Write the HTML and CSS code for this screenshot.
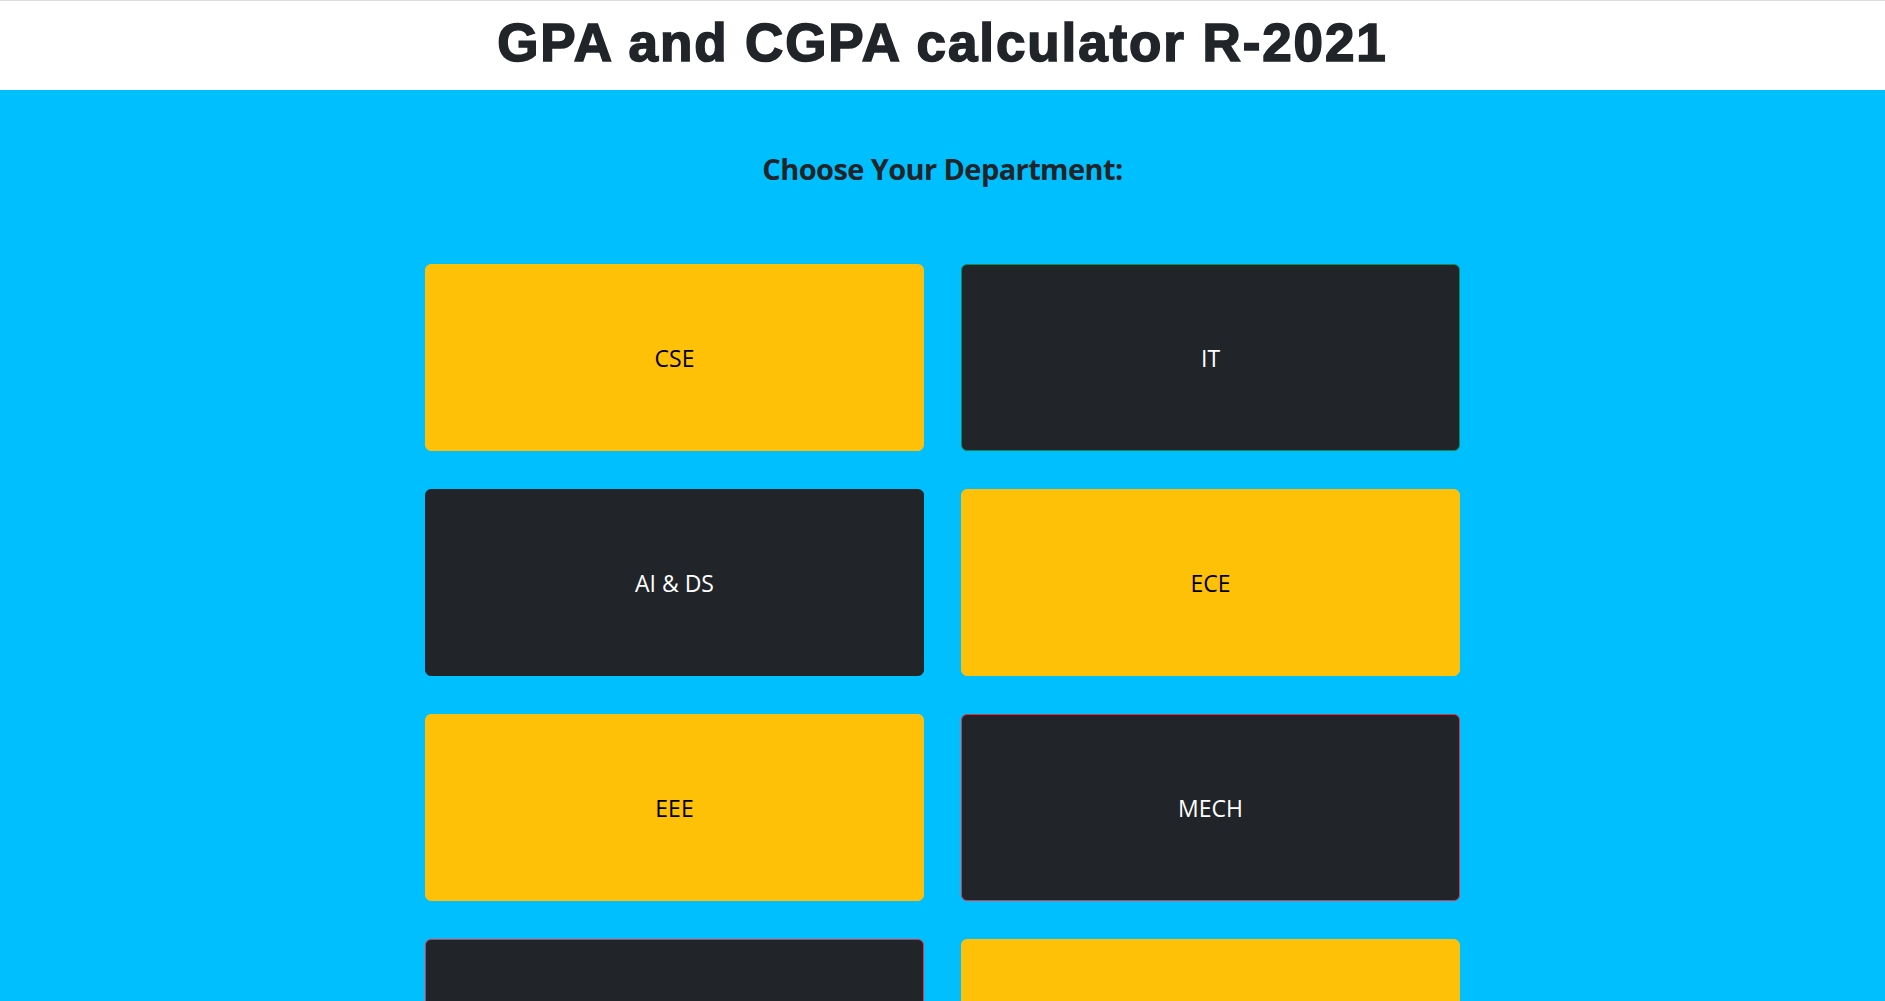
FILE: index.html
```html
<!DOCTYPE html>
<html lang="en">
<head>
<meta charset="utf-8">
<title>GPA and CGPA calculator R-2021</title>
<link rel="stylesheet" href="styles.css">
</head>
<body>
<header class="topbar">
  <h1 class="title">GPA and CGPA calculator R-2021</h1>
</header>
<main class="page">
  <h2 class="subtitle">Choose Your Department:</h2>
  <div class="grid">
    <a class="dept warn">CSE</a>
    <a class="dept dark green">IT</a>
    <a class="dept dark">AI &amp; DS</a>
    <a class="dept warn">ECE</a>
    <a class="dept warn">EEE</a>
    <a class="dept dark red">MECH</a>
    <a class="dept dark red">CIVIL</a>
    <a class="dept warn">MCT</a>
  </div>
</main>
</body>
</html>
```
FILE: styles.css
```css
html, body {
  margin: 0;
  padding: 0;
}
body {
  background: #00bfff;
  font-family: "Open Sans", "Noto Sans", sans-serif;
  color: #212529;
  overflow: hidden;
  height: 1001px;
}
.topbar {
  background: #ffffff;
  border-top: 1px solid #dcdcdc;
  height: 89px;
  display: flex;
  justify-content: center;
}
.title {
  margin: 0;
  padding-top: 12px;
  font-family: "Liberation Sans", Arial, sans-serif;
  font-weight: 700;
  font-size: 53px;
  line-height: 60px;
  letter-spacing: 1.9px;
  color: #212529;
  -webkit-text-stroke: 1.6px #212529;
}
.page {
  background: #00bfff;
  display: flex;
  flex-direction: column;
  align-items: center;
}
.subtitle {
  margin: 61px 0 0 0;
  font-size: 29px;
  line-height: 36px;
  font-weight: 700;
  letter-spacing: -0.6px;
  color: #212529;
}
.grid {
  margin-top: 77px;
  display: grid;
  grid-template-columns: 499px 499px;
  column-gap: 37px;
  row-gap: 38px;
}
.dept {
  box-sizing: border-box;
  height: 187px;
  border-radius: 6px;
  border: 1px solid transparent;
  display: flex;
  align-items: center;
  justify-content: center;
  font-size: 23px;
  text-decoration: none;
}
.warn {
  background: #ffc107;
  border-color: #ffc107;
  color: #000000;
}
.dark {
  background: #212529;
  border-color: #212529;
  color: #ffffff;
}
.green {
  border-color: #198754;
}
.red {
  border-color: #dc3545;
}
```
